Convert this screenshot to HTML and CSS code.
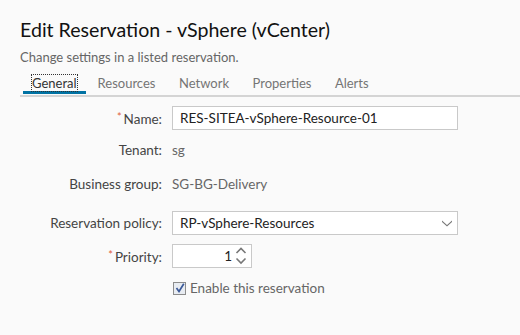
FILE: index.html
```html
<!DOCTYPE html>
<html lang="en">
<head>
    <meta charset="UTF-8">
    <meta name="viewport" content="width=device-width, initial-scale=1.0">
    <title>Edit Reservation</title>
    <link rel="stylesheet" href="styles.css">
</head>
<body>
    <header class="page-head">
        <h1>Edit Reservation - vSphere (vCenter)</h1>
        <p>Change settings in a listed reservation.</p>
    </header>

    <nav class="tabs">
        <a class="tab active"><span>General</span></a>
        <a class="tab"><span>Resources</span></a>
        <a class="tab"><span>Network</span></a>
        <a class="tab"><span>Properties</span></a>
        <a class="tab"><span>Alerts</span></a>
    </nav>

    <form class="form">
        <div class="row row-name">
            <label class="label"><span class="req">*</span>Name:</label>
            <div class="field">
                <input class="input wide" type="text" value="RES-SITEA-vSphere-Resource-01">
            </div>
        </div>
        <div class="row row-tenant">
            <label class="label">Tenant:</label>
            <div class="field value">sg</div>
        </div>
        <div class="row row-group">
            <label class="label">Business group:</label>
            <div class="field value">SG-BG-Delivery</div>
        </div>
        <div class="row row-policy">
            <label class="label">Reservation policy:</label>
            <div class="field">
                <div class="select wide">
                    <span>RP-vSphere-Resources</span>
                    <svg class="caret" width="12" height="8" viewBox="0 0 12 8">
                        <path d="M1 1.5 L6 6 L11 1.5 L11 3 L6 7.5 L1 3 Z" fill="#777"/>
                    </svg>
                </div>
            </div>
        </div>
        <div class="row row-priority">
            <label class="label"><span class="req">*</span>Priority:</label>
            <div class="field">
                <div class="spinner">
                    <span class="num">1</span>
                    <svg class="arrows" width="12" height="20" viewBox="0 0 12 20">
                        <path d="M1.5 7 L6 2.5 L10.5 7" fill="none" stroke="#777" stroke-width="1.6"/>
                        <path d="M1.5 12.5 L6 17 L10.5 12.5" fill="none" stroke="#777" stroke-width="1.6"/>
                    </svg>
                </div>
            </div>
        </div>
        <div class="row row-check">
            <div class="label"></div>
            <div class="field check">
                <span class="box">
                    <svg width="10" height="10" viewBox="0 0 10 10">
                        <path d="M1.5 5 L4 8.5 L8.8 0.8" fill="none" stroke="#3b5998" stroke-width="1.7"/>
                    </svg>
                </span>
                <span class="check-text">Enable this reservation</span>
            </div>
        </div>
    </form>
</body>
</html>
```

FILE: styles.css
```css
body {
    font-family: Lato, "Open Sans", Arial, sans-serif;
    margin: 0;
    padding: 0;
    background: #fafafa;
    color: #333;
}
.page-head {
    padding: 16px 20px 0;
}
.page-head h1 {
    margin: 0;
    font-size: 19.6px;
    font-weight: 400;
    line-height: 28px;
    color: #111;
}
.page-head p {
    margin: 4px 0 0;
    font-size: 13px;
    line-height: 18px;
    color: #666;
}
.tabs {
    display: flex;
    margin: 9px 0 0 20px;
    border-bottom: 2px solid #d4d4d4;
    height: 20px;
}
.tab {
    padding: 0 11.5px 0 12px;
    font-size: 13px;
    line-height: 17px;
    color: #757575;
}
.tab.active {
    color: #333;
    border-bottom: 3px solid #0072a3;
    margin-left: 3px;
    padding: 0 9px;
    height: 16px;
}
.tab.active span {
    outline: 1px dotted #333;
}
.form {
    padding: 9px 0 0 20px;
}
.row {
    display: flex;
    align-items: center;
    height: 24px;
}
.row-tenant { margin-top: 8px; }
.row-group { margin-top: 10px; }
.row-policy { margin-top: 15px; }
.row-priority { margin-top: 9px; }
.row-check { margin-top: 8px; }
.label {
    width: 142px;
    text-align: right;
    font-size: 13.5px;
    color: #444;
    flex-shrink: 0;
}
.req {
    color: #e0603a;
    font-size: 11px;
    vertical-align: 3px;
    margin-right: 2px;
}
.field {
    margin-left: 10px;
    font-size: 13.5px;
}
.value {
    color: #666;
}
.input,
.select,
.spinner {
    box-sizing: border-box;
    height: 24px;
    border: 1px solid #c9c9c9;
    background: #fff;
    font-family: inherit;
    font-size: 13.5px;
    color: #222;
}
.input {
    padding: 0 7px;
    outline: none;
}
.wide {
    width: 286px;
}
.select {
    display: flex;
    align-items: center;
    justify-content: space-between;
    padding: 0 4px 0 7px;
}
.spinner {
    width: 80px;
    display: flex;
    align-items: center;
    justify-content: flex-end;
    padding-right: 4px;
}
.num {
    margin-right: 3px;
}
.check {
    display: flex;
    align-items: center;
}
.box {
    box-sizing: border-box;
    width: 13px;
    height: 13px;
    border: 1px solid #8c8c8c;
    background: #e8ecf2;
    display: flex;
    align-items: center;
    justify-content: center;
    margin-left: 1px;
}
.check-text {
    margin-left: 4px;
    color: #666;
}
```
